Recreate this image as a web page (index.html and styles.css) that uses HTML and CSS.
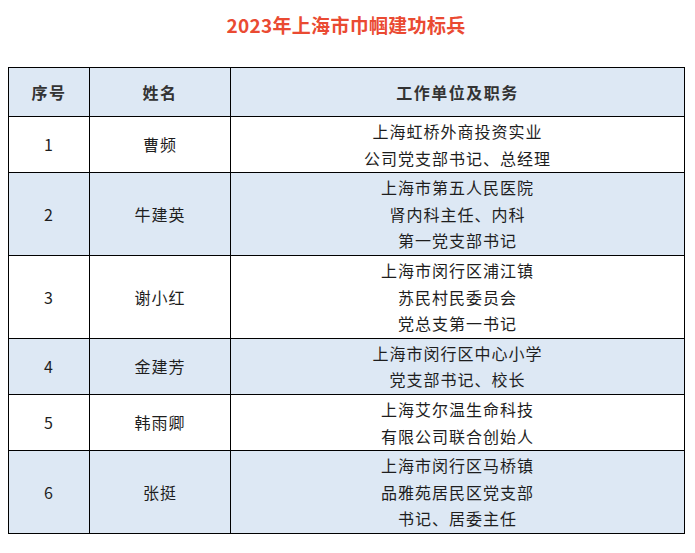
FILE: index.html
```html
<!DOCTYPE html>
<html lang="zh-CN">
<head>
<meta charset="utf-8">
<title>2023年上海市巾帼建功标兵</title>
<link rel="stylesheet" href="styles.css">
</head>
<body>
<div class="page">
  <h1 class="title">2023年上海市巾帼建功标兵</h1>
  <table class="list">
    <colgroup>
      <col class="c-no">
      <col class="c-name">
      <col class="c-job">
    </colgroup>
    <thead>
      <tr class="alt">
        <th>序号</th>
        <th>姓名</th>
        <th>工作单位及职务</th>
      </tr>
    </thead>
    <tbody>
      <tr>
        <td>1</td>
        <td>曹频</td>
        <td>上海虹桥外商投资实业<br>公司党支部书记、总经理</td>
      </tr>
      <tr class="alt">
        <td>2</td>
        <td>牛建英</td>
        <td>上海市第五人民医院<br>肾内科主任、内科<br>第一党支部书记</td>
      </tr>
      <tr>
        <td>3</td>
        <td>谢小红</td>
        <td>上海市闵行区浦江镇<br>苏民村民委员会<br>党总支第一书记</td>
      </tr>
      <tr class="alt">
        <td>4</td>
        <td>金建芳</td>
        <td>上海市闵行区中心小学<br>党支部书记、校长</td>
      </tr>
      <tr>
        <td>5</td>
        <td>韩雨卿</td>
        <td>上海艾尔温生命科技<br>有限公司联合创始人</td>
      </tr>
      <tr class="alt">
        <td>6</td>
        <td>张挺</td>
        <td>上海市闵行区马桥镇<br>品雅苑居民区党支部<br>书记、居委主任</td>
      </tr>
    </tbody>
  </table>
</div>
</body>
</html>
```

FILE: styles.css
```css
html, body {
  margin: 0;
  padding: 0;
  background: #ffffff;
}

.page {
  padding: 0 11px 0 8px;
  font-family: "Noto Sans CJK SC", "Noto Sans", sans-serif;
  color: #222222;
}

.title {
  margin: 10px 0 27px;
  font-size: 19px;
  line-height: 30px;
  font-weight: 700;
  text-align: center;
  color: #ea4a32;
  letter-spacing: 0.3px;
}

.list {
  width: 676px;
  border-collapse: collapse;
  table-layout: fixed;
  border: 1px solid #000;
}

.c-no { width: 81px; }
.c-name { width: 141px; }
.c-job { width: 454px; }

.list th,
.list td {
  border: 1px solid #000;
  text-align: center;
  vertical-align: middle;
  padding: 1px 0;
  font-size: 16px;
  line-height: 26.6px;
  letter-spacing: 1px;
}

.list th {
  padding: 11px 0 10px;
  line-height: 27px;
  font-weight: 700;
  color: #333333;
  letter-spacing: 1.5px;
}

.list td {
  font-weight: 400;
  color: #1e1e1e;
}

.list tr.alt th,
.list tr.alt td {
  background: #dde8f4;
}
```
